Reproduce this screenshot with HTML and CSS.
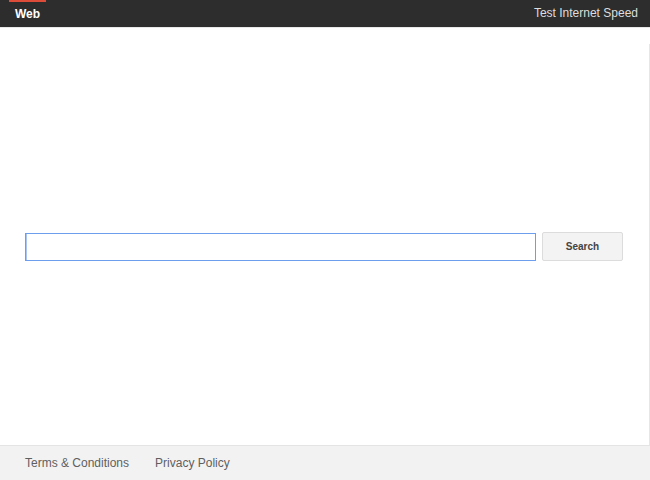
FILE: index.html
```html
<!DOCTYPE html>
<html>
  <head>
    <title>Web Search</title>
    <meta charset="UTF-8" />
    <link rel="stylesheet" href="styles.css">
  </head>
  <body>
    <div class="topbar">
      <a class="tab active" href="#">Web</a>
      <a class="speed" href="#">Test Internet Speed</a>
    </div>

    <div class="main">
      <div class="content">
        <form class="search">
          <input class="query" type="text">
          <button class="submit" type="button">Search</button>
        </form>
      </div>
    </div>

    <div class="footer">
      <a href="#">Terms &amp; Conditions</a>
      <a href="#">Privacy Policy</a>
    </div>
  </body>
</html>
```

FILE: styles.css
```css
html, body {
  height: 100%;
}

body {
  margin: 0;
  display: flex;
  flex-direction: column;
  font-family: "Liberation Sans", Arial, sans-serif;
  background: #fff;
}

a {
  text-decoration: none;
}

.topbar {
  height: 27px;
  background: #2d2d2d;
  border-bottom: 1px solid #e8e8e8;
  display: flex;
  align-items: stretch;
  justify-content: space-between;
  padding: 0 12px 0 9px;
}

.tab {
  width: 37px;
  text-align: center;
  font-size: 12px;
  font-weight: bold;
  color: #fff;
  border-top: 2px solid transparent;
  line-height: 25px;
}

.tab.active {
  border-top-color: #dd4b39;
}

.speed {
  font-size: 12px;
  color: #ddd;
  line-height: 27px;
}

.main {
  flex: 1;
  display: flex;
  flex-direction: column;
  padding-top: 16px;
}

.content {
  flex: 1;
  border-right: 1px solid #e6e6e6;
  display: flex;
  align-items: center;
  padding: 0 26px 0 25px;
}

.search {
  flex: 1;
  display: flex;
  gap: 6px;
  align-items: center;
  margin-top: 4px;
}

.query {
  flex: 1;
  height: 26px;
  margin: 0;
  padding: 0 6px;
  border: 1px solid #6d9eee;
  box-shadow: inset 1px 0 0 #a8c5f5;
  outline: none;
  font-size: 14px;
}

.submit {
  width: 81px;
  height: 29px;
  margin: 0;
  border: 1px solid #dcdcdc;
  border-radius: 2px;
  background: #f3f3f3;
  color: #444;
  font-family: "Liberation Sans", Arial, sans-serif;
  font-size: 10px;
  font-weight: bold;
}

.footer {
  height: 34px;
  background: #f2f2f2;
  border-top: 1px solid #e4e4e4;
  display: flex;
  align-items: center;
  gap: 26px;
  padding: 0 25px;
}

.footer a {
  font-size: 12px;
  color: #5f5f5f;
}
```
